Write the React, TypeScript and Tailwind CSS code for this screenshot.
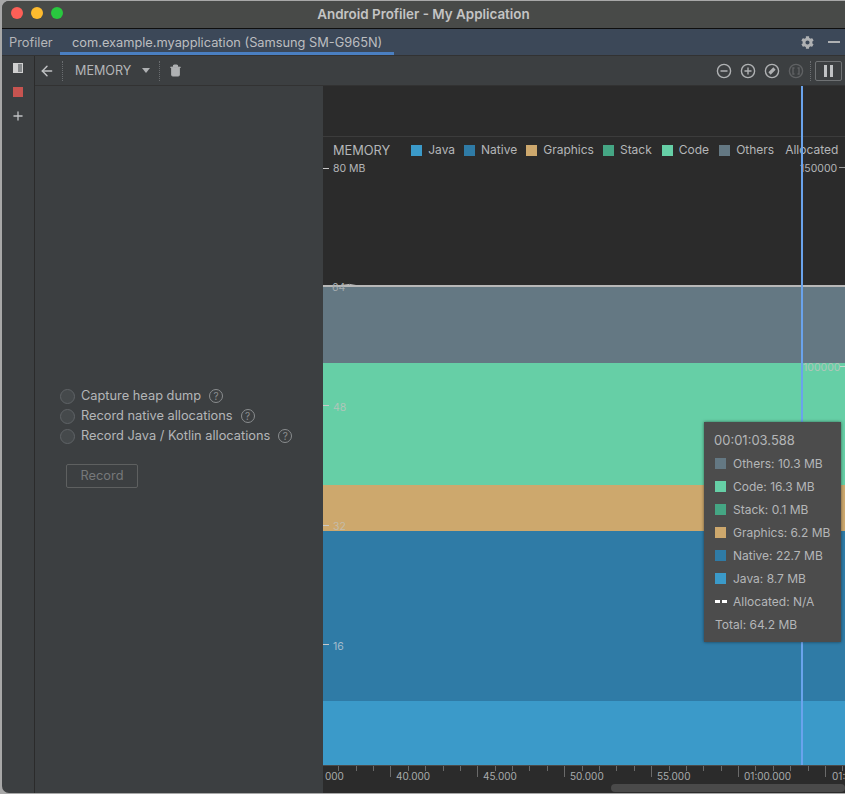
import type { ReactNode } from "react";
import { ArrowLeft, Plus, Trash2 } from "lucide-react";
import { FaCog } from "react-icons/fa";

const FONT = { fontFamily: '"Inter", "Liberation Sans", sans-serif' };

const COLORS = {
  java: "bg-[#3b9ac9]",
  native: "bg-[#2f7ba6]",
  graphics: "bg-[#cda86d]",
  stack: "bg-[#45a684]",
  code: "bg-[#66cfa6]",
  others: "bg-[#647883]",
};

const legend = [
  { label: "Java", color: COLORS.java, gap: "mr-[9px]" },
  { label: "Native", color: COLORS.native, gap: "mr-[9px]" },
  { label: "Graphics", color: COLORS.graphics, gap: "mr-[9px]" },
  { label: "Stack", color: COLORS.stack, gap: "mr-[10px]" },
  { label: "Code", color: COLORS.code, gap: "mr-[10px]" },
  { label: "Others", color: COLORS.others, gap: "mr-[11px]" },
];

const tooltipRows = [
  { label: "Others: 10.3 MB", color: COLORS.others },
  { label: "Code: 16.3 MB", color: COLORS.code },
  { label: "Stack: 0.1 MB", color: COLORS.stack },
  { label: "Graphics: 6.2 MB", color: COLORS.graphics },
  { label: "Native: 22.7 MB", color: COLORS.native },
  { label: "Java: 8.7 MB", color: COLORS.java },
];

const options = ["Capture heap dump", "Record native allocations", "Record Java / Kotlin allocations"];

const HelpIcon = () => (
  <span className="flex h-[14px] w-[14px] items-center justify-center rounded-full border border-[#8a8d8f] text-[10px] leading-none text-[#8a8d8f]">
    ?
  </span>
);

const ToolCircle = ({ children, dim }: { children: ReactNode; dim?: boolean }) => (
  <svg width="16" height="16" viewBox="0 0 16 16" fill="none" stroke={dim ? "#5f6163" : "#afb1b3"} strokeWidth="1.4">
    <circle cx="8" cy="8" r="6.6" />
    {children}
  </svg>
);

const axisLabels = [
  { label: "000", left: 2 },
  { label: "40.000", left: 73 },
  { label: "45.000", left: 160 },
  { label: "50.000", left: 247 },
  { label: "55.000", left: 334 },
  { label: "01:00.000", left: 421 },
  { label: "01:", left: 509 },
];

const ticks = Array.from({ length: 31 }, (_, i) => ({
  left: 15.3 + i * 17.38,
  major: i % 5 === 3,
}));

const yTicks = [82, 319, 439, 558];

export default function App() {
  return (
    <div className="h-[794px] w-[845px] overflow-hidden bg-[#a8a8a8]" style={FONT}>
      <div className="ml-[2px] mt-[1px] flex h-[792px] w-[850px] flex-col overflow-hidden rounded-[7px] bg-[#3c3f41] text-[#bbbbbb]">
        {/* title bar */}
        <div className="relative flex h-[28px] w-[843px] shrink-0 items-center justify-center border-b border-[#0e0e0e] bg-[#484a48] pb-[1px]">
          <div className="absolute left-[9px] top-[6px] flex gap-[8px]">
            <span className="h-3 w-3 rounded-full bg-[#fe5f57]" />
            <span className="h-3 w-3 rounded-full bg-[#febb2e]" />
            <span className="h-3 w-3 rounded-full bg-[#29c83f]" />
          </div>
          <span className="text-[13.4px] font-semibold text-[#c4c4c4]">Android Profiler - My Application</span>
        </div>

        {/* tab bar */}
        <div className="flex h-[27px] w-[843px] shrink-0 items-stretch border-b border-[#323232] bg-[#3c4858] text-[12.8px]">
          <span className="flex w-[58px] items-center pl-[7px] pt-[2px] text-[#b4b6b8]">Profiler</span>
          <span className="flex w-[334px] items-center border-b-[3px] border-[#4a7fc1] pl-[12px] pt-[4px] text-[#bcbec0]">
            com.example.myapplication (Samsung SM-G965N)
          </span>
          <div className="ml-auto flex items-center gap-[14px] pr-[5px]">
            <FaCog size={13} color="#afb1b3" />
            <span className="h-[2px] w-[12px] bg-[#afb1b3]" />
          </div>
        </div>

        <div className="flex min-h-0 w-[843px] flex-1">
          {/* left strip */}
          <div className="flex w-[33px] shrink-0 flex-col items-center border-r border-[#2b2b2b] pt-[7px]">
            <span className="flex h-[10px] w-[10px] border border-[#d0d0d0] bg-[#d0d0d0]">
              <span className="ml-auto h-full w-[4px] bg-[#85888a]" />
            </span>
            <span className="mt-[14px] h-[10px] w-[10px] bg-[#c75450]" />
            <Plus size={14} strokeWidth={2.2} color="#c0c2c4" className="mt-[12px]" />
          </div>

          <div className="flex min-w-0 flex-1 flex-col">
            {/* toolbar */}
            <div className="flex h-[30px] shrink-0 items-center border-b border-[#323232] bg-[#3c3f41]">
              <ArrowLeft size={16} strokeWidth={2.2} color="#c0c2c4" className="ml-[4px]" />
              <span className="ml-[7px] h-[20px] border-l border-dotted border-[#6a6d70]" />
              <span className="ml-[12px] pt-[1px] text-[12.6px] text-[#b4b6b8]">MEMORY</span>
              <span className="ml-[11px] h-0 w-0 border-x-[4.5px] border-t-[5px] border-x-transparent border-t-[#afb1b3]" />
              <span className="ml-[9px] h-[20px] border-l border-dotted border-[#6a6d70]" />
              <Trash2 size={13} fill="#afb1b3" stroke="#afb1b3" className="ml-[9px]" />
              <div className="ml-auto flex items-center gap-[8px] pr-[3px]">
                <ToolCircle>
                  <path d="M4.500 8h7" />
                </ToolCircle>
                <ToolCircle>
                  <path d="M4.500 8h7M8 4.500v7" />
                </ToolCircle>
                <ToolCircle>
                  <path d="M5.500 10.500l5-5" strokeWidth="3.200" />
                </ToolCircle>
                <ToolCircle dim>
                  <path d="M6.500 5h-1.500v6h1.500M9.500 5h1.500v6h-1.500" />
                </ToolCircle>
                <span className="-ml-[2px] h-[20px] border-l border-dotted border-[#6a6d70]" />
                <span className="-ml-[4px] flex h-[20px] w-[27px] items-center justify-center gap-[3px] rounded-[2px] border border-[#6f7274] bg-[#3c3f41]">
                  <span className="h-[12px] w-[3px] bg-[#c0c2c4]" />
                  <span className="h-[12px] w-[3px] bg-[#c0c2c4]" />
                </span>
              </div>
            </div>

            <div className="flex min-h-0 flex-1">
              {/* capture options */}
              <div className="flex w-[288px] shrink-0 flex-col pl-[25px] pt-[300px] text-[12.8px] text-[#b4b6b8]">
                {options.map((option) => (
                  <div key={option} className="flex h-[20px] items-center">
                    <span className="h-[15px] w-[15px] rounded-full border border-[#5f6366] bg-[#45494b]" />
                    <span className="ml-[6px]">{option}</span>
                    <span className="ml-[8px]">
                      <HelpIcon />
                    </span>
                  </div>
                ))}
                <button className="ml-[6px] mt-[18px] h-[24px] w-[72px] rounded-[2px] border border-[#5e6060] text-[12.8px] text-[#76787a]">
                  Record
                </button>
              </div>

              {/* chart */}
              <div className="relative flex min-w-0 flex-1 flex-col bg-[#2b2b2b]">
                <div className="h-[51px] shrink-0 border-b border-[#3c3c3c]" />
                <div className="flex h-[148px] shrink-0 items-start pt-[4px] text-[12px]">
                  <span className="ml-[10px] mr-[21px] text-[12.8px] text-[#b4b6b8]">MEMORY</span>
                  {legend.map((item) => (
                    <div key={item.label} className={`flex items-center gap-[6px] ${item.gap}`}>
                      <span className={`h-[11px] w-[11px] ${item.color}`} />
                      <span className="text-[#b4b6b8]">{item.label}</span>
                    </div>
                  ))}
                  <span className="whitespace-nowrap text-[#b4b6b8]">Allocated</span>
                </div>
                <div className="h-[2px] shrink-0 bg-[#b8b8b8]" />
                <div className={`h-[76px] shrink-0 ${COLORS.others}`} />
                <div className={`h-[122px] shrink-0 ${COLORS.code}`} />
                <div className={`h-[46px] shrink-0 ${COLORS.graphics}`} />
                <div className={`h-[170px] shrink-0 ${COLORS.native}`} />
                <div className={`h-[64px] shrink-0 ${COLORS.java}`} />
                <div className="relative min-h-0 flex-1 overflow-hidden border-t border-[#4a4a4a] bg-[#2b2b2b] text-[10px] text-[#a9abad]">
                  {ticks.map((tick) => (
                    <span
                      key={tick.left}
                      className={`absolute top-0 w-px bg-[#6a6a6a] ${tick.major ? "h-[11px]" : "h-[5px]"}`}
                      style={{ left: tick.left }}
                    />
                  ))}
                  {axisLabels.map((a) => (
                    <span key={a.label} className="absolute top-[3px]" style={{ left: a.left }}>
                      {a.label}
                    </span>
                  ))}
                  <span className="absolute bottom-[1px] left-[288px] h-[8px] w-[234px] rounded-full bg-[#4a4a4a]" />
                </div>

                {/* y axis */}
                {yTicks.map((y) => (
                  <span key={y} className="absolute left-0 h-px w-[6px] bg-[#c8c8c8]" style={{ top: y }} />
                ))}
                <span className="absolute left-[10px] top-[75px] text-[10.5px] text-[#b4b6b8]">80 MB</span>
                <span className="absolute left-[6px] top-[194px] text-[10.5px] text-[#a3abaf]">
                  &nbsp;64
                </span>
                <span className="absolute left-[10px] top-[314px] text-[10.5px] text-[#b0c6ba]">48</span>
                <span className="absolute left-[10px] top-[433px] text-[10.5px] text-[#c4bcaa]">32</span>
                <span className="absolute left-[10px] top-[553px] text-[10.5px] text-[#a4bdcd]">16</span>
                <span className="absolute left-[477px] top-[75px] text-[10.5px] text-[#b4b6b8]">150000</span>
                <span className="absolute left-[480px] top-[274px] text-[10.5px] text-[#b0c6ba]">100000</span>
                <span className="absolute left-[516px] top-[81px] h-px w-[7px] bg-[#9a9a9a]" />
                <span className="absolute left-[517px] top-[280px] h-px w-[6px] bg-[#c8d8d0]" />

                {/* allocation line bump */}
                <svg className="absolute left-0 top-[196px]" width="60" height="6" fill="none" stroke="#b8b8b8" strokeWidth="1">
                  <path d="M18 3.500 Q26 1 36 4" />
                </svg>

                {/* cursor line */}
                <span className="absolute bottom-[28px] left-[478px] top-0 w-[2px] bg-[#6aa3ec]" />

                {/* tooltip */}
                <div className="absolute left-[381px] top-[336px] h-[220px] w-[137px] bg-[#4c4c4c] pl-[11px] pt-[10px] text-[12px] text-[#b4b6b8] shadow-[0_0_3px_rgba(0,0,0,0.5)]">
                  <div className="-ml-px h-[20px] text-[13px] leading-[16px]">00:01:03.588</div>
                  {tooltipRows.map((row) => (
                    <div key={row.label} className="flex h-[23px] items-center">
                      <span className={`h-[11px] w-[11px] ${row.color}`} />
                      <span className="ml-[7px]">{row.label}</span>
                    </div>
                  ))}
                  <div className="flex h-[23px] items-center">
                    <span className="h-[3px] w-[5px] bg-white" />
                    <span className="ml-[2px] h-[3px] w-[5px] bg-white" />
                    <span className="ml-[6px]">Allocated: N/A</span>
                  </div>
                  <div className="flex h-[23px] items-center">Total: 64.2 MB</div>
                </div>
              </div>
            </div>
          </div>
        </div>
      </div>
    </div>
  );
}
